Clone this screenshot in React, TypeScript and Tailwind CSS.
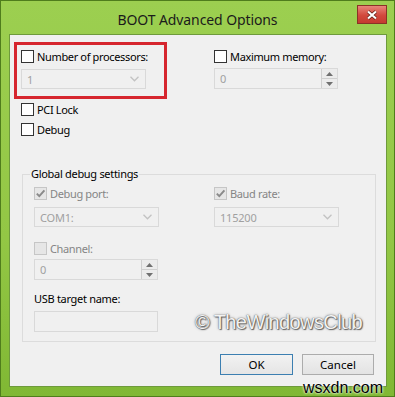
import React from "react";

type CheckProps = { checked?: boolean; disabled?: boolean };

const Check = ({ checked, disabled }: CheckProps) => (
  <span
    className={`flex h-[13px] w-[13px] shrink-0 items-center justify-center border ${
      disabled ? "border-[#c6c6c6] bg-[#e6e6e6]" : "border-[#333333] bg-white"
    }`}
  >
    {checked && (
      <svg width="11" height="11" viewBox="0 0 11 11">
        <path d="M1.8 5.6 L4.3 8.2 L9.4 2.4" fill="none" stroke="#8a8a8a" strokeWidth="1.9" />
      </svg>
    )}
  </span>
);

const CheckRow = ({ label, checked, disabled }: CheckProps & { label: string }) => (
  <div className="flex h-[13px] items-center gap-[3px]">
    <Check checked={checked} disabled={disabled} />
    <span className={`text-[11px] leading-none tracking-[-0.35px] ${disabled ? "text-[#858585]" : "text-black"}`}>
      {label}
    </span>
  </div>
);

const Combo = ({ value }: { value: string }) => (
  <div className="flex h-[20px] w-[125px] items-center justify-between border border-[#d9d9d9] bg-[#f0f0f0] pl-[5px] pr-[6px] text-[11px] tracking-[-0.2px] text-[#a0a0a0]">
    <span className="leading-none">{value}</span>
    <svg width="9" height="6" viewBox="0 0 9 6">
      <polyline points="0.5,0.8 4.5,4.8 8.5,0.8" fill="none" stroke="#c2c2c2" strokeWidth="1.3" />
    </svg>
  </div>
);

const Spin = ({ value }: { value: string }) => (
  <div className="flex h-[21px] w-[124px] border border-[#d9d9d9] bg-[#f0f0f0] text-[11px] text-[#a0a0a0]">
    <div className="flex flex-1 items-center pl-[5px] leading-none">{value}</div>
    <div className="flex w-[16px] flex-col border-l border-[#cfcfcf]">
      <div className="flex flex-1 items-center justify-center border-b border-[#cfcfcf] bg-[#ececec]">
        <svg width="7" height="4" viewBox="0 0 7 4">
          <polygon points="0,4 3.5,0 7,4" fill="#707070" />
        </svg>
      </div>
      <div className="flex flex-1 items-center justify-center bg-[#ececec]">
        <svg width="7" height="4" viewBox="0 0 7 4">
          <polygon points="0,0 3.5,4 7,0" fill="#707070" />
        </svg>
      </div>
    </div>
  </div>
);

const Button = ({ label, primary }: { label: string; primary?: boolean }) => (
  <button
    className={`flex h-[21px] items-center justify-center border text-[11.5px] text-black ${
      primary
        ? "w-[73px] border-[#3c7fb1] bg-[linear-gradient(#f2f2f2,#e5e5e5)]"
        : "w-[72px] border-[#acacac] bg-[linear-gradient(#f0f0f0,#e3e3e3)]"
    }`}
  >
    {label}
  </button>
);

export default function App() {
  return (
    <div className="relative h-[397px] w-[395px] overflow-hidden border border-[#4f7d1c] bg-[linear-gradient(180deg,#9ccf50_0%,#93c745_60%,#80b834_100%)] font-['Noto_Sans',sans-serif]">
      <div className="grid h-[33px] grid-cols-[1fr_auto_1fr] items-start">
        <div />
        <div className="pt-[12px] text-[14px] leading-none tracking-[-0.1px] text-[#1b1b1b]">BOOT Advanced Options</div>
        <div className="flex justify-end pr-[7px] pt-[4px]">
          <div className="flex h-[19px] w-[30px] items-center justify-center border border-[#8a3326] bg-[linear-gradient(#e8867a,#d2493d_55%,#c43b30)]">
            <svg width="12" height="10" viewBox="0 0 12 10">
              <path d="M2 1.5 L10 8.5 M10 1.5 L2 8.5" stroke="#5a1a12" strokeWidth="3.6" />
              <path d="M2 1.5 L10 8.5 M10 1.5 L2 8.5" stroke="#ffffff" strokeWidth="2.2" />
            </svg>
          </div>
        </div>
      </div>

      <div className="ml-[8px] h-[353px] w-[378px] border border-[#6e9a3c] bg-[#f0f0f0]">
        <div className="relative h-full">
          <div className="grid grid-cols-[193px_1fr] pl-[11px] pt-[15px]">
            <div>
              <CheckRow label="Number of processors:" />
              <div className="mt-[6px]">
                <Combo value="1" />
              </div>
            </div>
            <div>
              <CheckRow label="Maximum memory:" />
              <div className="mt-[5px]">
                <Spin value="0" />
              </div>
            </div>
          </div>
          <div className="pl-[11px] pt-[14px]">
            <CheckRow label="PCI Lock" />
            <div className="mt-[7px]">
              <CheckRow label="Debug" />
            </div>
          </div>

          <fieldset className="ml-[12px] mt-[30px] w-[354px] border border-[#dcdcdc] pb-[9px] pl-[11px] pt-[5px]">
            <legend className="ml-[-4px] px-[1px] text-[11px] leading-[16px] tracking-[-0.3px] text-black">
              Global debug settings
            </legend>
            <div className="grid grid-cols-[180px_1fr]">
              <div>
                <CheckRow label="Debug port:" checked disabled />
                <div className="mt-[7px]">
                  <Combo value="COM1:" />
                </div>
              </div>
              <div>
                <CheckRow label="Baud rate:" checked disabled />
                <div className="mt-[7px]">
                  <Combo value="115200" />
                </div>
              </div>
            </div>
            <div className="mt-[15px]">
              <CheckRow label="Channel:" disabled />
              <div className="mt-[4px]">
                <Spin value="0" />
              </div>
            </div>
            <div className="mt-[11px] text-[11px] leading-[16px] tracking-[-0.3px] text-black">USB target name:</div>
            <div className="mt-[4px] h-[21px] w-[124px] border border-[#d9d9d9] bg-[#f0f0f0]" />
          </fieldset>

          <div className="mt-[12px] flex justify-end gap-[9px] pr-[12px]">
            <Button label="OK" primary />
            <Button label="Cancel" />
          </div>

          <div className="pointer-events-none absolute left-[185px] top-[277px] whitespace-nowrap font-['Liberation_Sans',sans-serif] text-[20px] leading-none tracking-[-0.6px] text-[#f2f2f2] [text-shadow:0_0_1px_#444,1px_1px_1px_#666,0_0_3px_#999]">
            © TheWindowsClub
          </div>

          <div className="pointer-events-none absolute left-[4px] top-[7px] h-[57px] w-[153px] border-[3px] border-[#d6262e]" />
        </div>
      </div>

      <div className="pointer-events-none absolute bottom-[0px] right-[11px] font-['Liberation_Sans',sans-serif] text-[16px] leading-[16px] text-black [text-shadow:0_0_2px_#ffffff,0_0_3px_#ffffff]">
        wsxdn.com
      </div>
    </div>
  );
}
